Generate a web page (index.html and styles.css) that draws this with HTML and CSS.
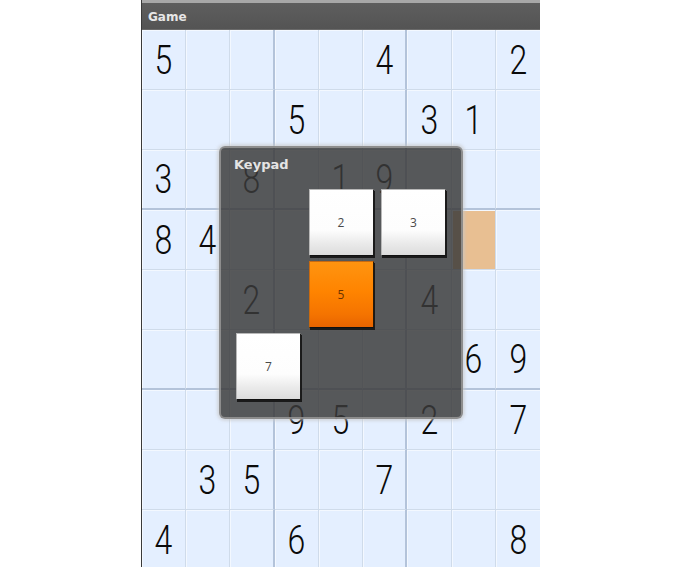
FILE: index.html
```html
<!DOCTYPE html>
<html>
<head>
<meta charset="utf-8">
<link rel="stylesheet" href="styles.css">
</head>
<body>
<div class="screen">
  <div class="status"></div>
  <div class="titlebar">Game</div>
  <div class="board">
    <div class="c"><span>5</span></div><div class="c"></div><div class="c"></div><div class="c"></div><div class="c"></div><div class="c"><span>4</span></div><div class="c"></div><div class="c"></div><div class="c"><span>2</span></div>
    <div class="c"></div><div class="c"></div><div class="c"></div><div class="c"><span>5</span></div><div class="c"></div><div class="c"></div><div class="c"><span>3</span></div><div class="c"><span>1</span></div><div class="c"></div>
    <div class="c"><span>3</span></div><div class="c"></div><div class="c"><span>8</span></div><div class="c"></div><div class="c"><span>1</span></div><div class="c"><span>9</span></div><div class="c"></div><div class="c"></div><div class="c"></div>
    <div class="c"><span>8</span></div><div class="c"><span>4</span></div><div class="c"></div><div class="c"></div><div class="c"></div><div class="c"></div><div class="c"></div><div class="c selected"></div><div class="c"></div>
    <div class="c"></div><div class="c"></div><div class="c"><span>2</span></div><div class="c"></div><div class="c"></div><div class="c"></div><div class="c"><span>4</span></div><div class="c"></div><div class="c"></div>
    <div class="c"></div><div class="c"></div><div class="c"></div><div class="c"></div><div class="c"></div><div class="c"></div><div class="c"></div><div class="c"><span>6</span></div><div class="c"><span>9</span></div>
    <div class="c"></div><div class="c"></div><div class="c"></div><div class="c"><span>9</span></div><div class="c"><span>5</span></div><div class="c"></div><div class="c"><span>2</span></div><div class="c"></div><div class="c"><span>7</span></div>
    <div class="c"></div><div class="c"><span>3</span></div><div class="c"><span>5</span></div><div class="c"></div><div class="c"></div><div class="c"><span>7</span></div><div class="c"></div><div class="c"></div><div class="c"></div>
    <div class="c"><span>4</span></div><div class="c"></div><div class="c"></div><div class="c"><span>6</span></div><div class="c"></div><div class="c"></div><div class="c"></div><div class="c"></div><div class="c"><span>8</span></div>
    <div class="keypad">
      <div class="keypad-title">Keypad</div>
      <div class="keys">
        <div class="key hidden">1</div>
        <div class="key">2</div>
        <div class="key">3</div>
        <div class="key hidden">4</div>
        <div class="key active">5</div>
        <div class="key hidden">6</div>
        <div class="key">7</div>
        <div class="key hidden">8</div>
        <div class="key hidden">9</div>
      </div>
    </div>
  </div>
</div>
</body>
</html>
```

FILE: styles.css
```css
html, body {
  margin: 0;
  padding: 0;
  background: #ffffff;
  overflow: hidden;
  height: 567px;
}

.screen {
  margin-left: 141px;
  width: 399px;
  border-left: 1px solid #3a3a3a;
  box-sizing: border-box;
  height: 567px;
  display: flex;
  flex-direction: column;
}

.status {
  flex: 0 0 3px;
  background: #a8a8a8;
}

.titlebar {
  flex: 0 0 27px;
  background: linear-gradient(#5e5e5e, #545454);
  color: #e6e6e6;
  font: bold 12px "DejaVu Sans", sans-serif;
  line-height: 24px;
  padding: 2px 0 0 6px;
  border-bottom: 1px solid #6a6a6a;
  box-sizing: border-box;
}

.board {
  flex: 0 0 540px;
  position: relative;
  display: grid;
  grid-template-columns: repeat(9, 1fr);
  grid-template-rows: repeat(9, 60px);
  background: #e4efff;
  width: 398px;
}

.c {
  box-sizing: border-box;
  border-right: 1px solid #cfdbea;
  border-bottom: 1px solid #cfdbea;
  box-shadow: inset 1px 1px 0 #f3f8ff;
  display: flex;
  align-items: center;
  justify-content: center;
  font: 300 41px Roboto, "DejaVu Sans", sans-serif;
  color: #0a0a0a;
}

.c span {
  display: inline-block;
  transform: scaleX(0.78);
}

.c:nth-child(9n+3),
.c:nth-child(9n+6) {
  border-right: 2px solid #b3c3da;
}

.c:nth-child(9n) {
  border-right: none;
}

.c:nth-child(n+19):nth-child(-n+27),
.c:nth-child(n+46):nth-child(-n+54) {
  border-bottom: 2px solid #b3c3da;
}

.selected {
  background: #e8bf92;
}

.keypad {
  position: absolute;
  left: 77px;
  top: 116px;
  width: 244px;
  height: 273px;
  box-sizing: border-box;
  background: rgba(58, 58, 58, 0.84);
  border: 2px solid rgba(150, 150, 150, 0.85);
  border-radius: 6px;
  box-shadow: 0 0 3px 2px rgba(200, 200, 200, 0.6);
  padding: 9px 0 0 13px;
}

.keypad-title {
  font: bold 13px "DejaVu Sans", sans-serif;
  color: #e4e4e4;
  height: 30px;
  line-height: 16px;
}

.keys {
  display: grid;
  grid-template-columns: repeat(3, 65px);
  grid-template-rows: repeat(3, 67px);
  column-gap: 7.5px;
  row-gap: 5px;
  margin-left: 2px;
  margin-top: 2px;
}

.key {
  box-sizing: border-box;
  background: linear-gradient(#ffffff 0%, #fdfdfd 62%, #ececec 80%, #dcdcdc 100%);
  border: 1px solid;
  border-color: #b8b8b8 #1c1c1c #111111 #b8b8b8;
  box-shadow: 1px 2px 0 #1a1a1a;
  display: flex;
  align-items: center;
  justify-content: center;
  font: 12px "Open Sans", sans-serif;
  color: #4a4a4a;
}

.key.active {
  background: linear-gradient(#ff9410 0%, #ff8400 45%, #f57400 80%, #e86400 100%);
  border-color: #c86a10 #2a1a08 #111 #c86a10;
  color: #6b3200;
}

.key.hidden {
  visibility: hidden;
}
```
